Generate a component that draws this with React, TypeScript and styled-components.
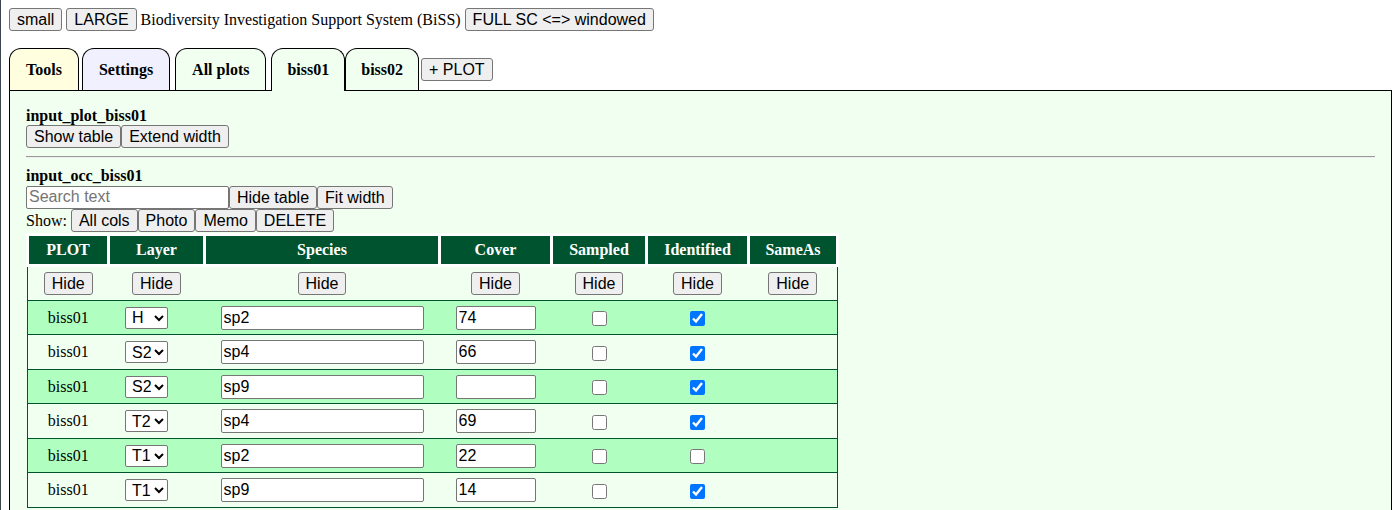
import React from 'react';
import styled, { createGlobalStyle } from 'styled-components';

const GlobalStyle = createGlobalStyle`
  html {
    border-left: 1px solid #3b4550;
  }
  body {
    margin: 8px;
    font-family: "Liberation Serif", "Times New Roman", serif;
    font-size: 16px;
    color: #000;
    background: #fff;
  }
`;

const GREEN = '#00532f';

const TopBar = styled.div`
  display: flex;
  align-items: baseline;
  gap: 4px;
`;

const Button = styled.button`
  box-sizing: border-box;
  height: 23px;
  margin: 0;
  padding: 1px 7px;
  font-family: "Liberation Sans", Arial, sans-serif;
  font-size: 16px;
  line-height: 19px;
  color: #000;
  background: #efefef;
  border: 1px solid #767676;
  border-radius: 3px;
  white-space: nowrap;
`;

const TabBar = styled.div`
  display: flex;
  align-items: flex-end;
  margin-top: 17px;
`;

interface TabProps {
  $bg: string;
  $active?: boolean;
  $gap?: number;
  $pad?: number;
}

const Tab = styled.div<TabProps>`
  box-sizing: border-box;
  height: ${p => (p.$active ? 43 : 42)}px;
  margin-bottom: ${p => (p.$active ? -1 : 0)}px;
  margin-right: ${p => p.$gap ?? 0}px;
  padding: 0 ${p => p.$pad ?? 16}px;
  display: flex;
  align-items: center;
  border: 1px solid #000;
  border-bottom: none;
  border-radius: 12px 12px 0 0;
  background: ${p => p.$bg};
  font-weight: bold;
  position: relative;
  z-index: ${p => (p.$active ? 1 : 0)};
`;

const AddPlot = styled(Button)`
  margin: 0 0 9px 2px;
`;

const Panel = styled.div`
  border: 1px solid #000;
  background: #f0fff0;
  padding: 15px 16px 24px;
`;

const Title = styled.div`
  font-weight: bold;
  line-height: 19px;
`;

const Row = styled.div<{ $h?: number }>`
  display: flex;
  align-items: center;
  height: ${p => p.$h ?? 23}px;
`;

const Rule = styled.hr`
  margin: 8px 0;
  border: none;
  border-top: 1px solid #9a9a9a;
  border-bottom: 1px solid #eeeeee;
`;

const Search = styled.input`
  box-sizing: border-box;
  width: 203px;
  height: 23px;
  margin: 0;
  padding: 1px 2px;
  font-family: "Liberation Sans", Arial, sans-serif;
  font-size: 16px;
  border: 1px solid #767676;
  border-radius: 2px;
  background: #fff;

  &::placeholder {
    color: #757575;
  }
`;

const ShowLabel = styled.span`
  margin-right: 4px;
`;

const Table = styled.table`
  border-collapse: collapse;
  table-layout: fixed;
  width: 813px;
  margin-top: 1px;
`;

const Th = styled.th`
  background: ${GREEN};
  color: #fff;
  border: 3px solid #fff;
  padding: 5px 2px;
  font-weight: bold;
  text-align: center;
`;

const Tr = styled.tr<{ $alt?: boolean }>`
  background: ${p => (p.$alt ? '#b0ffc0' : '#f0fff0')};
  border-bottom: 1px solid ${GREEN};
`;

const Td = styled.td`
  padding: 5px 2px 4.5px;
  text-align: center;
  vertical-align: middle;

  &:first-child {
    border-left: 1px solid ${GREEN};
  }
  &:last-child {
    border-right: 1px solid ${GREEN};
  }
`;

const LayerSelect = styled.select`
  box-sizing: border-box;
  width: 43px;
  height: 22px;
  margin: 0 20px 0 0;
  padding: 0 0 0 2px;
  font-family: "Liberation Sans", Arial, sans-serif;
  font-size: 16px;
  color: #000;
  background: #fff;
  border: 1px solid #767676;
  border-radius: 2px;
  vertical-align: middle;
`;

const CellInput = styled.input<{ $w: number }>`
  box-sizing: border-box;
  width: ${p => p.$w}px;
  height: 24px;
  margin: 0;
  padding: 1px 2px;
  font-family: "Liberation Sans", Arial, sans-serif;
  font-size: 16px;
  color: #000;
  background: #fff;
  border: 1px solid #767676;
  border-radius: 2px;
  vertical-align: middle;
`;

const Check = styled.input`
  width: 15px;
  height: 15px;
  margin: 0;
  vertical-align: middle;
`;

const columns = [
  { name: 'PLOT', width: 81 },
  { name: 'Layer', width: 96 },
  { name: 'Species', width: 235 },
  { name: 'Cover', width: 112 },
  { name: 'Sampled', width: 95 },
  { name: 'Identified', width: 102 },
  { name: 'SameAs', width: 89 },
];

const layers = ['H', 'S1', 'S2', 'T1', 'T2'];

const rows = [
  { layer: 'H', species: 'sp2', cover: '74', sampled: false, identified: true },
  { layer: 'S2', species: 'sp4', cover: '66', sampled: false, identified: true },
  { layer: 'S2', species: 'sp9', cover: '', sampled: false, identified: true },
  { layer: 'T2', species: 'sp4', cover: '69', sampled: false, identified: true },
  { layer: 'T1', species: 'sp2', cover: '22', sampled: false, identified: false },
  { layer: 'T1', species: 'sp9', cover: '14', sampled: false, identified: true },
];

const App: React.FC = () => {
  return (
    <>
      <GlobalStyle />
      <TopBar>
        <Button>small</Button>
        <Button>LARGE</Button>
        <span>Biodiversity Investigation Support System (BiSS)</span>
        <Button>FULL SC &lt;=&gt; windowed</Button>
      </TopBar>

      <TabBar>
        <Tab $bg="#ffffe0" $gap={3}>Tools</Tab>
        <Tab $bg="#f0f0ff" $gap={5}>Settings</Tab>
        <Tab $bg="#f0fff0" $gap={5}>All plots</Tab>
        <Tab $bg="#f0fff0" $pad={15} $active>biss01</Tab>
        <Tab $bg="#f0fff0" $pad={15}>biss02</Tab>
        <AddPlot>+ PLOT</AddPlot>
      </TabBar>

      <Panel>
        <Title>input_plot_biss01</Title>
        <Row>
          <Button>Show table</Button>
          <Button>Extend width</Button>
        </Row>

        <Rule />

        <Title>input_occ_biss01</Title>
        <Row $h={24}>
          <Search placeholder="Search text" />
          <Button>Hide table</Button>
          <Button>Fit width</Button>
        </Row>
        <Row>
          <ShowLabel>Show:</ShowLabel>
          <Button>All cols</Button>
          <Button>Photo</Button>
          <Button>Memo</Button>
          <Button>DELETE</Button>
        </Row>

        <Table>
          <colgroup>
            {columns.map(c => (
              <col key={c.name} style={{ width: c.width }} />
            ))}
          </colgroup>
          <thead>
            <tr>
              {columns.map(c => (
                <Th key={c.name}>{c.name}</Th>
              ))}
            </tr>
          </thead>
          <tbody>
            <Tr>
              {columns.map(c => (
                <Td key={c.name}>
                  <Button>Hide</Button>
                </Td>
              ))}
            </Tr>
            {rows.map((r, i) => (
              <Tr key={i} $alt={i % 2 === 0}>
                <Td>biss01</Td>
                <Td>
                  <LayerSelect defaultValue={r.layer}>
                    {layers.map(l => (
                      <option key={l}>{l}</option>
                    ))}
                  </LayerSelect>
                </Td>
                <Td>
                  <CellInput $w={203} defaultValue={r.species} />
                </Td>
                <Td>
                  <CellInput $w={80} defaultValue={r.cover} />
                </Td>
                <Td>
                  <Check type="checkbox" defaultChecked={r.sampled} />
                </Td>
                <Td>
                  <Check type="checkbox" defaultChecked={r.identified} />
                </Td>
                <Td />
              </Tr>
            ))}
          </tbody>
        </Table>
      </Panel>
    </>
  );
};

export default App;
